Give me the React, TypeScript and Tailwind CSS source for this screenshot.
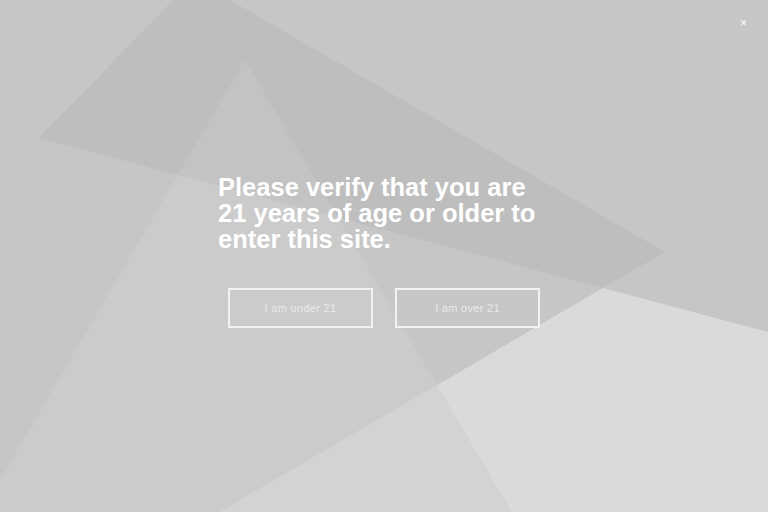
import React from "react";

function Backdrop() {
  return (
    <svg
      className="absolute inset-0 w-full h-full"
      viewBox="0 0 768 512"
      preserveAspectRatio="none"
    >
      <rect x="0" y="0" width="768" height="512" fill="#c6c6c6" />
      {/* dark band */}
      <polygon points="39,138 173,0 230,0 665,252 603,288" fill="#bebebe" />
      {/* tall light triangle */}
      <polygon points="245,60 0,480 0,512 512,512" fill="#ffffff" fillOpacity="0.09" />
      {/* lower right light area */}
      <polygon points="220,512 603,288 768,332 768,512" fill="#dadada" />
      <polygon points="220,512 437,385 512,512" fill="#d3d3d3" />
    </svg>
  );
}

export default function App() {
  return (
    <div
      className="relative w-full h-[512px] overflow-hidden bg-[#c6c6c6]"
      style={{ fontFamily: '"Liberation Sans", Arial, sans-serif' }}
    >
      <Backdrop />

      <button className="absolute top-[17px] right-[21px] text-white text-[12px] leading-none">
        ×
      </button>

      <div className="relative h-full flex items-center justify-center pb-[10px]">
        <div className="w-[332px]">
          <h1 className="text-white font-bold text-[25.5px] leading-[26px]">
            Please verify that you are 21 years of age or older to enter this site.
          </h1>

          <div className="flex justify-center gap-[22px] mt-[36px]">
            <button className="w-[145px] h-[40px] border-2 border-[#f2f2f2] text-[#eaeaea] text-[11px] tracking-[0.3px]">
              I am under 21
            </button>
            <button className="w-[145px] h-[40px] border-2 border-[#f2f2f2] text-[#eaeaea] text-[11px] tracking-[0.3px]">
              I am over 21
            </button>
          </div>
        </div>
      </div>
    </div>
  );
}
